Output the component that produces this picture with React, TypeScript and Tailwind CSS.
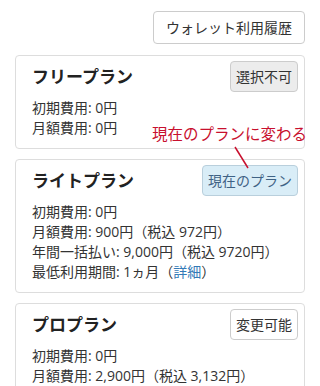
const FONT = "font-['Open_Sans','Noto_Sans_CJK_JP',sans-serif]";

type Plan = {
  name: string;
  badge: string;
  badgeClass: string;
  lines: React.ReactNode[];
};

const plans: Plan[] = [
  {
    name: 'フリープラン',
    badge: '選択不可',
    badgeClass: 'bg-[#ececec] border-[#cccccc] text-[#333]',
    lines: ['初期費用: 0円', '月額費用: 0円'],
  },
  {
    name: 'ライトプラン',
    badge: '現在のプラン',
    badgeClass: 'bg-[#d9edf7] border-[#b9cfdc] text-[#3f6285]',
    lines: [
      '初期費用: 0円',
      '月額費用: 900円（税込 972円）',
      '年間一括払い: 9,000円（税込 9720円）',
      <>
        最低利用期間: 1ヵ月（<span className="text-[#337ab7]">詳細</span>）
      </>,
    ],
  },
  {
    name: 'プロプラン',
    badge: '変更可能',
    badgeClass: 'bg-white border-[#cccccc] text-[#333]',
    lines: ['初期費用: 0円', '月額費用: 2,900円（税込 3,132円）'],
  },
];

function PlanCard({ plan }: { plan: Plan }) {
  return (
    <div className="border border-[#dddddd] rounded-[4px] bg-white pl-4 pr-[6px] pt-[5px] pb-[10px]">
      <div className="flex items-start justify-between">
        <h2 className="mt-[4px] text-[17px] leading-[24px] font-bold text-[#222]">{plan.name}</h2>
        <span
          className={`h-[31px] px-[5px] flex items-center rounded-[4px] border text-[14px] ${plan.badgeClass}`}
        >
          {plan.badge}
        </span>
      </div>
      <div className="mt-[6px] text-[14px] leading-[20px] text-[#333]">
        {plan.lines.map((line, i) => (
          <div key={i}>{line}</div>
        ))}
      </div>
    </div>
  );
}

export default function App() {
  return (
    <div className={`${FONT} relative w-[320px] h-[386px] overflow-hidden bg-white px-[15px] pt-[11px]`}>
      <div className="flex justify-end">
        <button className="h-[33px] px-[12px] rounded-[4px] border border-[#cccccc] bg-white text-[14px] text-[#333]">
          ウォレット利用履歴
        </button>
      </div>
      <div className="mt-[11px] flex flex-col gap-[10px]">
        {plans.map((plan) => (
          <PlanCard key={plan.name} plan={plan} />
        ))}
      </div>

      <div className="absolute left-[152px] top-[123px] text-[15.5px] leading-[22px] text-[#c8102e] whitespace-nowrap">
        現在のプランに変わる
      </div>
      <svg className="absolute left-0 top-0" width="320" height="386" viewBox="0 0 320 386">
        <line x1="235" y1="147" x2="248" y2="168" stroke="#c8102e" strokeWidth="1.5" />
      </svg>
    </div>
  );
}
